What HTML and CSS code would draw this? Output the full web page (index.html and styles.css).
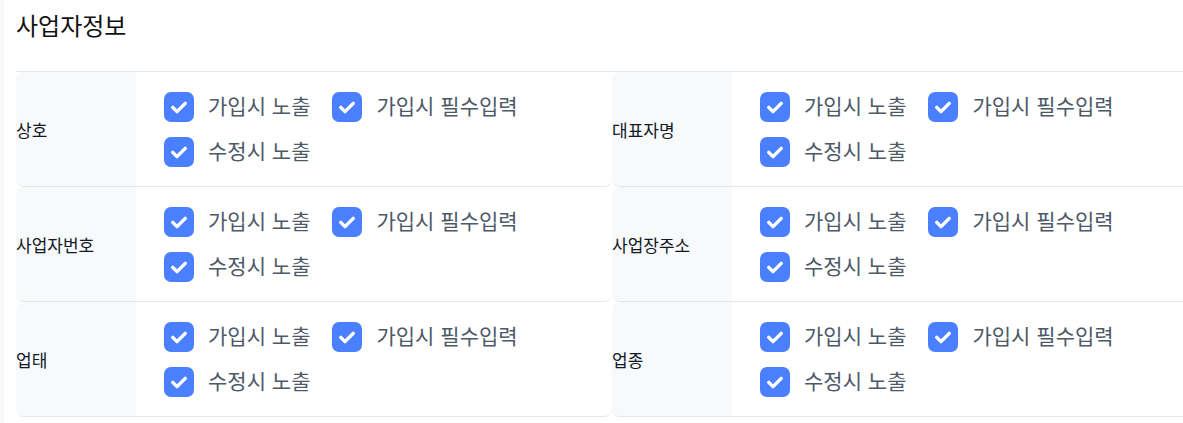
FILE: index.html
```html
<!DOCTYPE html>
<html lang="ko">
<head>
<meta charset="utf-8">
<title>사업자정보</title>
<link rel="stylesheet" href="styles.css">
</head>
<body>
<div class="page">
  <h2 class="title">사업자정보</h2>
  <div class="grid">
    <div class="cell">
      <div class="label">상호</div>
      <div class="options">
        <label class="opt"><span class="box"><svg viewBox="0 0 24 24"><path d="M7 12.3l3.4 3.4L17 9.1"/></svg></span><span class="txt">가입시 노출</span></label>
        <label class="opt"><span class="box"><svg viewBox="0 0 24 24"><path d="M7 12.3l3.4 3.4L17 9.1"/></svg></span><span class="txt">가입시 필수입력</span></label>
        <label class="opt"><span class="box"><svg viewBox="0 0 24 24"><path d="M7 12.3l3.4 3.4L17 9.1"/></svg></span><span class="txt">수정시 노출</span></label>
      </div>
    </div>
    <div class="cell">
      <div class="label">대표자명</div>
      <div class="options">
        <label class="opt"><span class="box"><svg viewBox="0 0 24 24"><path d="M7 12.3l3.4 3.4L17 9.1"/></svg></span><span class="txt">가입시 노출</span></label>
        <label class="opt"><span class="box"><svg viewBox="0 0 24 24"><path d="M7 12.3l3.4 3.4L17 9.1"/></svg></span><span class="txt">가입시 필수입력</span></label>
        <label class="opt"><span class="box"><svg viewBox="0 0 24 24"><path d="M7 12.3l3.4 3.4L17 9.1"/></svg></span><span class="txt">수정시 노출</span></label>
      </div>
    </div>
    <div class="cell">
      <div class="label">사업자번호</div>
      <div class="options">
        <label class="opt"><span class="box"><svg viewBox="0 0 24 24"><path d="M7 12.3l3.4 3.4L17 9.1"/></svg></span><span class="txt">가입시 노출</span></label>
        <label class="opt"><span class="box"><svg viewBox="0 0 24 24"><path d="M7 12.3l3.4 3.4L17 9.1"/></svg></span><span class="txt">가입시 필수입력</span></label>
        <label class="opt"><span class="box"><svg viewBox="0 0 24 24"><path d="M7 12.3l3.4 3.4L17 9.1"/></svg></span><span class="txt">수정시 노출</span></label>
      </div>
    </div>
    <div class="cell">
      <div class="label">사업장주소</div>
      <div class="options">
        <label class="opt"><span class="box"><svg viewBox="0 0 24 24"><path d="M7 12.3l3.4 3.4L17 9.1"/></svg></span><span class="txt">가입시 노출</span></label>
        <label class="opt"><span class="box"><svg viewBox="0 0 24 24"><path d="M7 12.3l3.4 3.4L17 9.1"/></svg></span><span class="txt">가입시 필수입력</span></label>
        <label class="opt"><span class="box"><svg viewBox="0 0 24 24"><path d="M7 12.3l3.4 3.4L17 9.1"/></svg></span><span class="txt">수정시 노출</span></label>
      </div>
    </div>
    <div class="cell">
      <div class="label">업태</div>
      <div class="options">
        <label class="opt"><span class="box"><svg viewBox="0 0 24 24"><path d="M7 12.3l3.4 3.4L17 9.1"/></svg></span><span class="txt">가입시 노출</span></label>
        <label class="opt"><span class="box"><svg viewBox="0 0 24 24"><path d="M7 12.3l3.4 3.4L17 9.1"/></svg></span><span class="txt">가입시 필수입력</span></label>
        <label class="opt"><span class="box"><svg viewBox="0 0 24 24"><path d="M7 12.3l3.4 3.4L17 9.1"/></svg></span><span class="txt">수정시 노출</span></label>
      </div>
    </div>
    <div class="cell">
      <div class="label">업종</div>
      <div class="options">
        <label class="opt"><span class="box"><svg viewBox="0 0 24 24"><path d="M7 12.3l3.4 3.4L17 9.1"/></svg></span><span class="txt">가입시 노출</span></label>
        <label class="opt"><span class="box"><svg viewBox="0 0 24 24"><path d="M7 12.3l3.4 3.4L17 9.1"/></svg></span><span class="txt">가입시 필수입력</span></label>
        <label class="opt"><span class="box"><svg viewBox="0 0 24 24"><path d="M7 12.3l3.4 3.4L17 9.1"/></svg></span><span class="txt">수정시 노출</span></label>
      </div>
    </div>
  </div>
</div>
</body>
</html>
```

FILE: styles.css
```css
html, body {
  margin: 0;
  padding: 0;
  background: #ffffff;
  overflow: hidden;
}
body {
  font-family: "Noto Sans CJK KR", "Noto Sans", sans-serif;
  color: #191f28;
}
.page {
  border-left: 4px solid #f7f8fa;
  padding: 9px 0 0 12px;
  min-height: 423px;
  box-sizing: border-box;
  overflow: hidden;
}
.title {
  margin: 0 0 30px;
  font-size: 24px;
  line-height: 32px;
  font-weight: 400;
  color: #111111;
}
.grid {
  display: grid;
  grid-template-columns: 596px 596px;
  width: 1192px;
  border-top: 1px solid #e5e7eb;
}
.cell {
  display: flex;
  border-bottom: 1px solid #e5e7eb;
  border-radius: 8px;
  overflow: hidden;
}
.label {
  width: 120px;
  flex: none;
  background: #f8f9fb;
  display: flex;
  align-items: center;
  font-size: 17px;
  color: #111827;
}
.options {
  flex: 1;
  display: flex;
  flex-wrap: wrap;
  align-content: center;
  gap: 15px 22px;
  padding: 20px 0 19px 28px;
  min-height: 75px;
}
.opt {
  display: flex;
  align-items: center;
  height: 30px;
  gap: 14px;
  font-size: 21px;
  color: #4e5968;
  cursor: pointer;
}
.txt {
  line-height: 30px;
  padding-bottom: 4px;
}
.box {
  width: 30px;
  height: 30px;
  border-radius: 7px;
  background: #4a80ff;
  display: flex;
  align-items: center;
  justify-content: center;
  flex: none;
}
.box svg {
  width: 30px;
  height: 30px;
  fill: none;
  stroke: #ffffff;
  stroke-width: 2.8;
  stroke-linecap: round;
  stroke-linejoin: round;
}
```
